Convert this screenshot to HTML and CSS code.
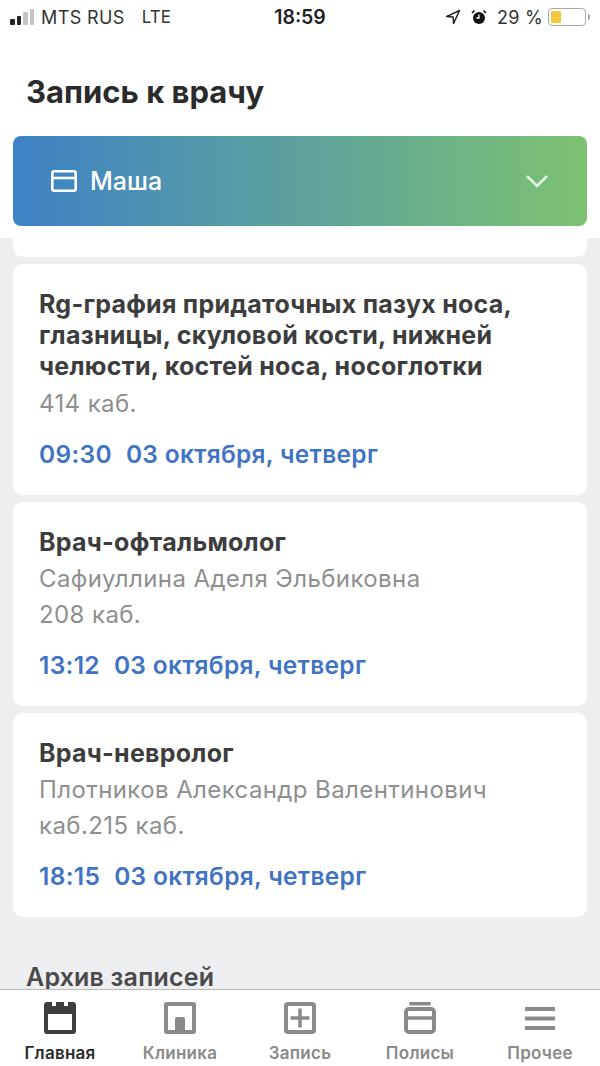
FILE: index.html
```html
<!DOCTYPE html>
<html lang="ru">
<head>
    <meta charset="UTF-8">
    <meta name="viewport" content="width=device-width, initial-scale=1.0">
    <title>Запись к врачу</title>
    <link rel="stylesheet" href="styles.css">
</head>
<body>
    <div class="phone">
        <div class="status-bar">
            <div class="status-left">
                <div class="signal">
                    <span class="on s1"></span>
                    <span class="on s2"></span>
                    <span class="s3"></span>
                    <span class="s4"></span>
                </div>
                <span class="carrier">MTS RUS</span>
                <span class="net">LTE</span>
            </div>
            <div class="status-time">18:59</div>
            <div class="status-right">
                <svg class="loc-icon" viewBox="0 0 16 16" width="16" height="16">
                    <path d="M14.5 1.5 1.5 7.6l6.6.4.5 6.5z" fill="none" stroke="#222" stroke-width="1.5" stroke-linejoin="round"/>
                </svg>
                <svg class="alarm-icon" viewBox="0 0 16 16" width="16" height="16">
                    <circle cx="8" cy="9" r="6" fill="#111"/>
                    <path d="M8 5.5V9H5.5" fill="none" stroke="#fff" stroke-width="1.3"/>
                    <path d="M1 4 3.5 1.5M15 4l-2.5-2.5" stroke="#111" stroke-width="1.6"/>
                </svg>
                <span class="percent">29 %</span>
                <div class="battery"><div class="battery-level"></div></div>
                <div class="battery-tip"></div>
            </div>
        </div>

        <header class="top">
            <h1 class="page-title">Запись к врачу</h1>
            <div class="patient">
                <div class="patient-left">
                    <svg class="card-icon" viewBox="0 0 26 22" width="26" height="22">
                        <rect x="1.3" y="1.3" width="23.4" height="19.4" rx="2" fill="none" stroke="#fff" stroke-width="2.6"/>
                        <path d="M1 8h24" stroke="#fff" stroke-width="2.6"/>
                    </svg>
                    <span class="patient-name">Маша</span>
                </div>
                <svg class="chevron" viewBox="0 0 24 14" width="24" height="14">
                    <path d="M2 2l10 10L22 2" fill="none" stroke="#e6f3e2" stroke-width="2.6"/>
                </svg>
            </div>
        </header>

        <main class="content">
            <div class="card card-cut"></div>

            <div class="card">
                <div class="card-title">Rg-графия придаточных пазух носа, глазницы, скуловой кости, нижней челюсти, костей носа, носоглотки</div>
                <div class="card-text">414 каб.</div>
                <div class="card-date"><span>09:30</span><span>03 октября, четверг</span></div>
            </div>

            <div class="card">
                <div class="card-title">Врач-офтальмолог</div>
                <div class="card-text">Сафиуллина Аделя Эльбиковна</div>
                <div class="card-text">208 каб.</div>
                <div class="card-date"><span>13:12</span><span>03 октября, четверг</span></div>
            </div>

            <div class="card">
                <div class="card-title">Врач-невролог</div>
                <div class="card-text">Плотников Александр Валентинович</div>
                <div class="card-text">каб.215 каб.</div>
                <div class="card-date"><span>18:15</span><span>03 октября, четверг</span></div>
            </div>

            <h2 class="archive-title">Архив записей</h2>
        </main>

        <nav class="tabbar">
            <a class="tab active">
                <svg viewBox="0 0 32 32" width="32" height="32">
                    <path d="M3 0h5v4h4V0h8v4h4V0h5a3 3 0 0 1 3 3v26a3 3 0 0 1-3 3H3a3 3 0 0 1-3-3V3a3 3 0 0 1 3-3zm1 12v16h24V12z" fill="#3f3f3f" fill-rule="evenodd"/>
                </svg>
                <span>Главная</span>
            </a>
            <a class="tab">
                <svg viewBox="0 0 32 32" width="32" height="32">
                    <path d="M3 0h26a3 3 0 0 1 3 3v26a3 3 0 0 1-3 3H3a3 3 0 0 1-3-3V3a3 3 0 0 1 3-3zm1 4v24h7V17a2 2 0 0 1 2-2h6a2 2 0 0 1 2 2v11h7V4z" fill="#8a8a8a" fill-rule="evenodd"/>
                </svg>
                <span>Клиника</span>
            </a>
            <a class="tab">
                <svg viewBox="0 0 32 32" width="32" height="32">
                    <rect x="2" y="2" width="28" height="28" rx="2" fill="none" stroke="#8a8a8a" stroke-width="4"/>
                    <path d="M16 6.500v19M6.500 16h19" stroke="#8a8a8a" stroke-width="3.500"/>
                </svg>
                <span>Запись</span>
            </a>
            <a class="tab">
                <svg viewBox="0 0 32 32" width="32" height="32">
                    <rect x="5" y="0" width="22" height="3.500" rx="1.700" fill="#8a8a8a"/>
                    <rect x="2" y="7" width="28" height="23" rx="3" fill="none" stroke="#8a8a8a" stroke-width="4"/>
                    <path d="M1 16h30" stroke="#8a8a8a" stroke-width="3.500"/>
                </svg>
                <span>Полисы</span>
            </a>
            <a class="tab">
                <svg viewBox="0 0 32 32" width="32" height="32">
                    <path d="M1 7h30M1 16.500h30M1 26h30" stroke="#8a8a8a" stroke-width="4"/>
                </svg>
                <span>Прочее</span>
            </a>
        </nav>
    </div>
</body>
</html>
```
FILE: styles.css
```css
:root {
    --page: #eceef0;
    --text: #3d3d3d;
    --light-text: #8f8f8f;
    --blue: #3f74c4;
    --tab: #8a8a8a;
}

* {
    margin: 0;
    padding: 0;
    box-sizing: border-box;
}

html, body {
    height: 100%;
}

body {
    font-family: Inter, "Noto Sans", sans-serif;
    background-color: var(--page);
    color: var(--text);
    overflow: hidden;
}

.phone {
    height: 1066px;
    display: flex;
    flex-direction: column;
}

/* status bar */
.status-bar {
    height: 34px;
    flex-shrink: 0;
    background-color: white;
    display: grid;
    grid-template-columns: 1fr auto 1fr;
    align-items: center;
    padding: 0 10px;
    font-size: 18px;
    color: #333;
}

.status-left {
    display: flex;
    align-items: center;
}

.signal {
    display: flex;
    align-items: flex-end;
    gap: 2px;
    margin-right: 7px;
}

.signal span {
    width: 4.500px;
    background-color: #c4c4c4;
    border-radius: 1px;
}

.signal .on {
    background-color: #222;
}

.s1 { height: 6px; }
.s2 { height: 9px; }
.s3 { height: 13px; }
.s4 { height: 16px; }

.carrier {
    letter-spacing: 0.4px;
}

.net {
    margin-left: 17px;
    font-size: 17px;
}

.status-time {
    font-size: 19.500px;
    font-weight: 600;
    color: #222;
}

.status-right {
    display: flex;
    align-items: center;
    justify-content: flex-end;
}

.loc-icon {
    margin-right: 10px;
}

.alarm-icon {
    margin-right: 10px;
}

.percent {
    margin-right: 5px;
    letter-spacing: 0.3px;
}

.battery {
    width: 38px;
    height: 18px;
    border: 1.500px solid #a8a8a8;
    border-radius: 4px;
    padding: 2px;
}

.battery-level {
    width: 10px;
    height: 100%;
    background-color: #f5c93e;
    border-radius: 1px;
}

.battery-tip {
    width: 2px;
    height: 6px;
    margin-left: 2px;
    background-color: #a8a8a8;
    border-radius: 0 2px 2px 0;
}

/* header */
.top {
    flex-shrink: 0;
    background-color: white;
    padding: 0 13px 13px;
    height: 204px;
}

.page-title {
    font-size: 31px;
    line-height: 40px;
    font-weight: 700;
    color: #2b2b2b;
    margin: 38px 0 24px 13px;
}

.patient {
    height: 90px;
    border-radius: 8px;
    background: linear-gradient(90deg, #3d82c6, #7dc271);
    display: flex;
    align-items: center;
    justify-content: space-between;
    padding: 0 38px;
    color: white;
}

.patient-left {
    display: flex;
    align-items: center;
    gap: 13px;
}

.patient-name {
    font-size: 25px;
    font-weight: 500;
}

/* list */
.content {
    flex: 1;
    min-height: 0;
    overflow: hidden;
    padding: 0 13px;
    display: flex;
    flex-direction: column;
    gap: 7px;
}

.card {
    background-color: white;
    border-radius: 10px;
    padding: 25px 26px 22px;
    flex-shrink: 0;
}

.card-cut {
    height: 19px;
    padding: 0;
    border-radius: 0 0 10px 10px;
}

.card-title {
    font-size: 25px;
    line-height: 31.200px;
    font-weight: 700;
    color: var(--text);
    letter-spacing: 0.26px;
    margin-bottom: 3px;
}

.card-text {
    font-size: 24px;
    line-height: 36px;
    color: var(--light-text);
    letter-spacing: 0.4px;
}

.card-date {
    margin-top: 13px;
    font-size: 24.500px;
    line-height: 38px;
    font-weight: 600;
    color: var(--blue);
    letter-spacing: 0.3px;
    display: flex;
    gap: 14px;
}

.archive-title {
    margin: 38px 0 0 13px;
    font-size: 25px;
    line-height: 30px;
    font-weight: 600;
    color: #4a4a4a;
    letter-spacing: 0.2px;
    flex-shrink: 0;
}

/* tab bar */
.tabbar {
    height: 77px;
    flex-shrink: 0;
    background-color: white;
    border-top: 1px solid #b8b8b8;
    display: grid;
    grid-template-columns: repeat(5, 1fr);
    padding: 12px 0 0;
}

.tab {
    display: flex;
    flex-direction: column;
    align-items: center;
    gap: 9px;
    font-size: 17px;
    font-weight: 600;
    letter-spacing: 0.25px;
    color: var(--tab);
}

.tab.active {
    color: #2b2b2b;
}
```
